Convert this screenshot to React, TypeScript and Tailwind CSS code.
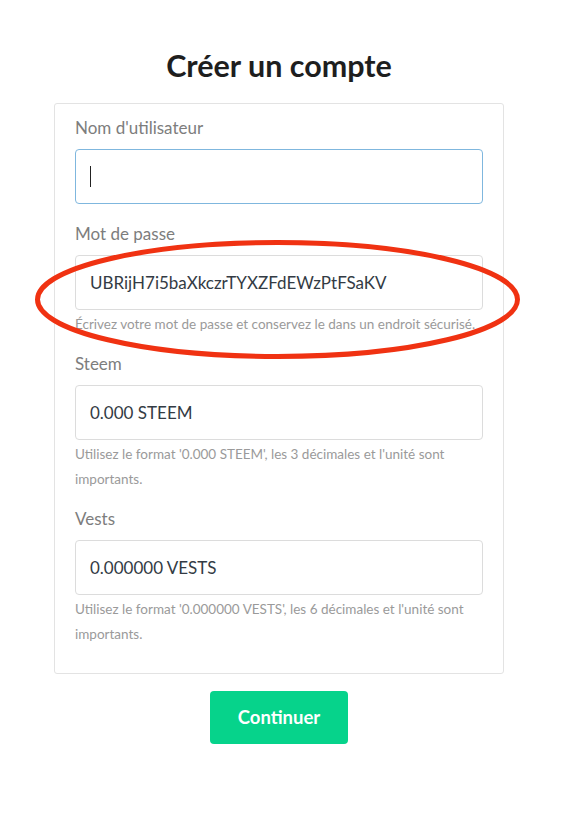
import React from "react";

function Field({
  label,
  value,
  help,
  focused,
  cls,
}: {
  label: string;
  value?: string;
  help?: React.ReactNode;
  focused?: boolean;
  cls?: string;
}) {
  return (
    <div className={cls}>
      <div className="h-[24px] leading-[24px] text-[17px] text-[#7d7d7d] mb-[9px]">{label}</div>
      <div
        className={
          "h-[55px] rounded-[4px] border flex items-center pl-[14px] text-[17px] text-[#333b44] " +
          (focused ? "border-[#7fb7de]" : "border-[#dcdcdc]")
        }
      >
        {focused ? <span className="block w-[1px] h-[21px] bg-[#222]" /> : value}
      </div>
      {help && <div className="mt-[2px] text-[13.5px] leading-[25px] text-[#9a9a9a]">{help}</div>}
    </div>
  );
}

export default function App() {
  return (
    <div
      className="relative min-h-[829px] w-[585px] bg-white"
      style={{ fontFamily: "Lato, 'Open Sans', sans-serif" }}
    >
      <div className="w-[558px] flex flex-col items-center pt-[45px]">
        <h1 className="text-[30.5px] leading-[40px] font-bold text-[#1e1e1e] mb-[18px]">Créer un compte</h1>
        <div className="w-[450px] border border-[#e3e3e3] rounded-[3px] px-[20px] pt-[12px] pb-[26px]">
          <Field label="Nom d'utilisateur" focused cls="mb-[18px]" />
          <Field
            label="Mot de passe"
            value="UBRijH7i5baXkczrTYXZFdEWzPtFSaKV"
            help="Écrivez votre mot de passe et conservez le dans un endroit sécurisé."
            cls="mb-[15px]"
          />
          <Field
            label="Steem"
            value="0.000 STEEM"
            help="Utilisez le format '0.000 STEEM', les 3 décimales et l'unité sont importants."
            cls="mb-[15px]"
          />
          <Field
            label="Vests"
            value="0.000000 VESTS"
            help="Utilisez le format '0.000000 VESTS', les 6 décimales et l'unité sont importants."
          />
        </div>
        <button className="mt-[17px] w-[138px] h-[53px] rounded-[4px] bg-[#06d38b] text-white font-bold text-[18.5px]">
          Continuer
        </button>
      </div>
      <svg
        className="absolute left-0 top-0 pointer-events-none"
        width="585"
        height="829"
        viewBox="0 0 585 829"
      >
        <ellipse
          cx="277.5"
          cy="299.5"
          rx="240"
          ry="57"
          fill="none"
          stroke="#f03212"
          strokeWidth="5"
        />
      </svg>
    </div>
  );
}
